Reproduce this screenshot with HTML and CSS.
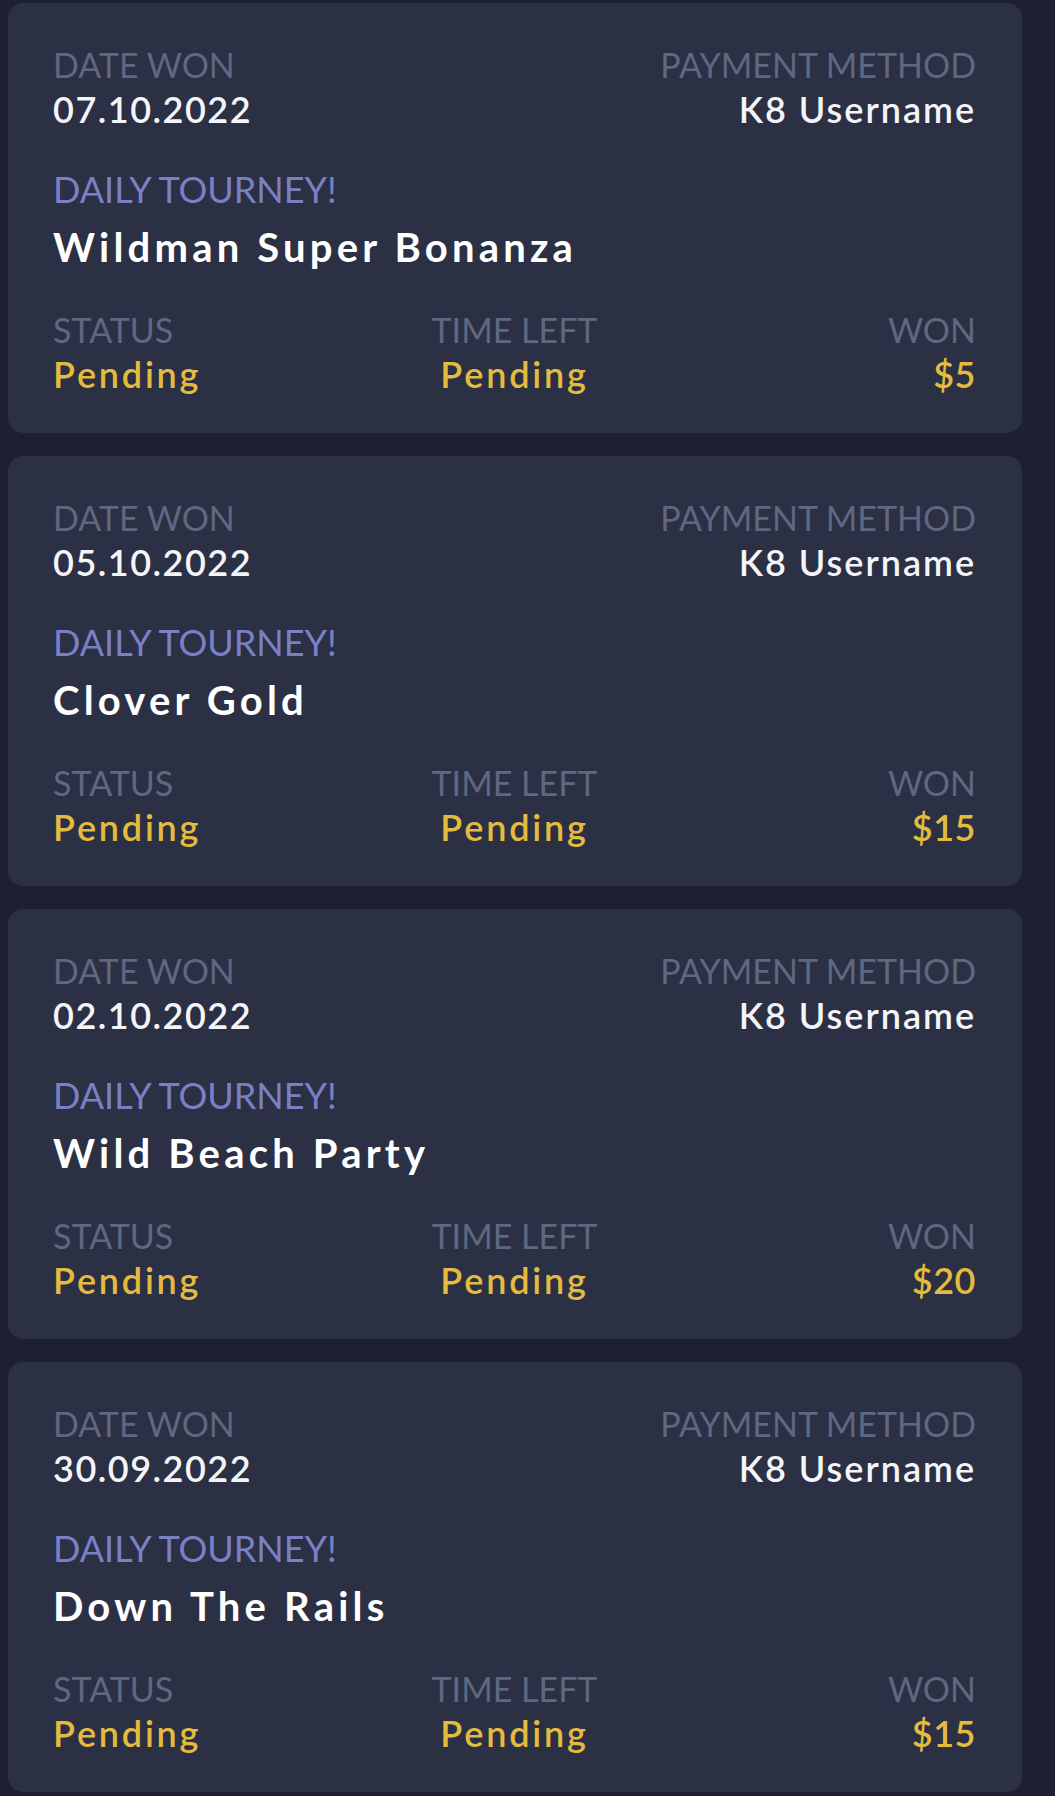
FILE: index.html
```html
<!DOCTYPE html>
<html lang="en">
<head>
    <meta charset="UTF-8">
    <meta name="viewport" content="width=device-width, initial-scale=1.0">
    <title>Tourney Wins</title>
    <link rel="stylesheet" href="styles.css">
</head>
<body>

    <div class="wins-list">

        <!-- Win #1 -->
        <div class="win-card">
            <div class="win-row">
                <div class="win-field">
                    <div class="field-label">Date Won</div>
                    <div class="field-value">07.10.2022</div>
                </div>
                <div class="win-field align-right">
                    <div class="field-label">Payment Method</div>
                    <div class="field-value">K8 Username</div>
                </div>
            </div>
            <div class="win-event">
                <div class="event-type">Daily Tourney!</div>
                <div class="event-name">Wildman Super Bonanza</div>
            </div>
            <div class="win-stats">
                <div class="win-field">
                    <div class="field-label">Status</div>
                    <div class="field-value pending">Pending</div>
                </div>
                <div class="win-field align-center">
                    <div class="field-label">Time Left</div>
                    <div class="field-value pending">Pending</div>
                </div>
                <div class="win-field align-right">
                    <div class="field-label">Won</div>
                    <div class="field-value pending amount">$5</div>
                </div>
            </div>
        </div>

        <!-- Win #2 -->
        <div class="win-card">
            <div class="win-row">
                <div class="win-field">
                    <div class="field-label">Date Won</div>
                    <div class="field-value">05.10.2022</div>
                </div>
                <div class="win-field align-right">
                    <div class="field-label">Payment Method</div>
                    <div class="field-value">K8 Username</div>
                </div>
            </div>
            <div class="win-event">
                <div class="event-type">Daily Tourney!</div>
                <div class="event-name">Clover Gold</div>
            </div>
            <div class="win-stats">
                <div class="win-field">
                    <div class="field-label">Status</div>
                    <div class="field-value pending">Pending</div>
                </div>
                <div class="win-field align-center">
                    <div class="field-label">Time Left</div>
                    <div class="field-value pending">Pending</div>
                </div>
                <div class="win-field align-right">
                    <div class="field-label">Won</div>
                    <div class="field-value pending amount">$15</div>
                </div>
            </div>
        </div>

        <!-- Win #3 -->
        <div class="win-card">
            <div class="win-row">
                <div class="win-field">
                    <div class="field-label">Date Won</div>
                    <div class="field-value">02.10.2022</div>
                </div>
                <div class="win-field align-right">
                    <div class="field-label">Payment Method</div>
                    <div class="field-value">K8 Username</div>
                </div>
            </div>
            <div class="win-event">
                <div class="event-type">Daily Tourney!</div>
                <div class="event-name">Wild Beach Party</div>
            </div>
            <div class="win-stats">
                <div class="win-field">
                    <div class="field-label">Status</div>
                    <div class="field-value pending">Pending</div>
                </div>
                <div class="win-field align-center">
                    <div class="field-label">Time Left</div>
                    <div class="field-value pending">Pending</div>
                </div>
                <div class="win-field align-right">
                    <div class="field-label">Won</div>
                    <div class="field-value pending amount">$20</div>
                </div>
            </div>
        </div>

        <!-- Win #4 -->
        <div class="win-card">
            <div class="win-row">
                <div class="win-field">
                    <div class="field-label">Date Won</div>
                    <div class="field-value">30.09.2022</div>
                </div>
                <div class="win-field align-right">
                    <div class="field-label">Payment Method</div>
                    <div class="field-value">K8 Username</div>
                </div>
            </div>
            <div class="win-event">
                <div class="event-type">Daily Tourney!</div>
                <div class="event-name">Down The Rails</div>
            </div>
            <div class="win-stats">
                <div class="win-field">
                    <div class="field-label">Status</div>
                    <div class="field-value pending">Pending</div>
                </div>
                <div class="win-field align-center">
                    <div class="field-label">Time Left</div>
                    <div class="field-value pending">Pending</div>
                </div>
                <div class="win-field align-right">
                    <div class="field-label">Won</div>
                    <div class="field-value pending amount">$15</div>
                </div>
            </div>
        </div>

    </div>

</body>
</html>
```

FILE: styles.css
```css
/* Tourney wins list */
body {
    margin: 0;
    background-color: #1c2031;
    font-family: 'Lato', 'Noto Sans', sans-serif;
    color: #f4f5f8;
}

.wins-list {
    display: flex;
    flex-direction: column;
    gap: 23px;
    padding: 3px 33px 6px 8px;
}

.win-card {
    background-color: #2b3044;
    border-radius: 15px;
    padding: 39px 46px 36px 45px;
}

.win-row {
    display: flex;
    justify-content: space-between;
}

.win-stats {
    display: grid;
    grid-template-columns: 1fr 1fr 1fr;
    margin-top: 35px;
}

.align-center {
    text-align: center;
}

.align-right {
    text-align: right;
}

.field-label {
    font-size: 34px;
    line-height: 45px;
    text-transform: uppercase;
    color: #5f6781;
    font-weight: 400;
}

.field-value {
    font-size: 36px;
    line-height: 45px;
    font-weight: 600;
    letter-spacing: 1.5px;
    color: #f4f5f8;
}

.win-row .align-right .field-value {
    letter-spacing: 2px;
}

.field-value.pending {
    color: #e3bb3e;
    letter-spacing: 2.8px;
}

.field-value.amount {
    letter-spacing: 0.5px;
}

/* Event block */
.win-event {
    margin-top: 35px;
}

.event-type {
    font-size: 36px;
    line-height: 45px;
    text-transform: uppercase;
    color: #7a80c4;
}

.event-name {
    margin-top: 10px;
    font-size: 40px;
    line-height: 50px;
    font-weight: 700;
    letter-spacing: 4.2px;
    color: #ffffff;
}
```
